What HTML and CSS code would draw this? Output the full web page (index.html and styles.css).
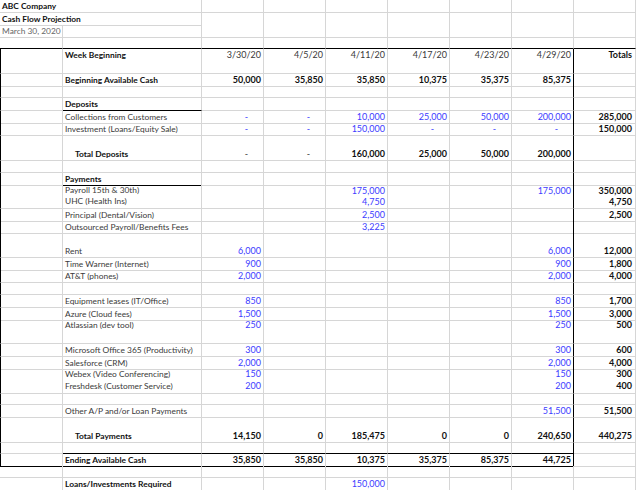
FILE: index.html
```html
<!DOCTYPE html>
<html lang="en">
<head>
    <meta charset="UTF-8">
    <meta name="viewport" content="width=device-width, initial-scale=1.0">
    <title>Cash Flow Projection</title>
    <link rel="stylesheet" href="styles.css">
</head>
<body>

<div class="sheet">
    <!-- En-tête -->
    <div class="row h13">
        <div class="c span2 b">ABC Company</div>
        <div class="c"></div><div class="c"></div><div class="c"></div><div class="c"></div><div class="c"></div><div class="c"></div><div class="c"></div>
    </div>
    <div class="row h12">
        <div class="c span2 b">Cash Flow Projection</div>
        <div class="c nb"></div><div class="c nb"></div><div class="c nb"></div><div class="c nb"></div><div class="c nb"></div><div class="c nb"></div><div class="c nb"></div>
    </div>
    <div class="row h13">
        <div class="c muted">March 30, 2020</div>
        <div class="c"></div><div class="c"></div><div class="c"></div><div class="c"></div><div class="c"></div><div class="c"></div><div class="c"></div><div class="c"></div>
    </div>
    <div class="row h11">
        <div class="c kb"></div><div class="c kb"></div><div class="c kb"></div><div class="c kb"></div><div class="c kb"></div><div class="c kb"></div><div class="c kb"></div><div class="c kb"></div><div class="c kb"></div>
    </div>

    <!-- Semaines -->
    <div class="row h25 top">
        <div class="c bl"></div>
        <div class="c b">Week Beginning</div>
        <div class="c n">3/30/20</div>
        <div class="c n">4/5/20</div>
        <div class="c n">4/11/20</div>
        <div class="c n">4/17/20</div>
        <div class="c n">4/23/20</div>
        <div class="c n kr">4/29/20</div>
        <div class="c n b last">Totals</div>
    </div>
    <div class="row h12">
        <div class="c bl"></div>
        <div class="c b">Beginning Available Cash</div>
        <div class="c n b">50,000</div>
        <div class="c n b">35,850</div>
        <div class="c n b">35,850</div>
        <div class="c n b">10,375</div>
        <div class="c n b">35,375</div>
        <div class="c n b kr">85,375</div>
        <div class="c last"></div>
    </div>
    <div class="row h12">
        <div class="c bl"></div><div class="c"></div><div class="c"></div><div class="c"></div><div class="c"></div><div class="c"></div><div class="c"></div><div class="c kr"></div><div class="c"></div>
    </div>

    <!-- Dépôts -->
    <div class="row h13">
        <div class="c bl"></div>
        <div class="c b kb">Deposits</div>
        <div class="c"></div><div class="c"></div><div class="c"></div><div class="c"></div><div class="c"></div><div class="c kr"></div><div class="c"></div>
    </div>
    <div class="row h12">
        <div class="c bl"></div>
        <div class="c">Collections from Customers</div>
        <div class="c n blu dash">-</div>
        <div class="c n blu dash">-</div>
        <div class="c n blu">10,000</div>
        <div class="c n blu">25,000</div>
        <div class="c n blu">50,000</div>
        <div class="c n blu kr">200,000</div>
        <div class="c n b last">285,000</div>
    </div>
    <div class="row h13">
        <div class="c bl"></div>
        <div class="c">Investment (Loans/Equity Sale)</div>
        <div class="c n blu dash">-</div>
        <div class="c n blu dash">-</div>
        <div class="c n blu">150,000</div>
        <div class="c n blu dash">-</div>
        <div class="c n blu dash">-</div>
        <div class="c n blu dash kr">-</div>
        <div class="c n b last">150,000</div>
    </div>
    <div class="row h25 bot">
        <div class="c bl"></div>
        <div class="c b ind">Total Deposits</div>
        <div class="c n dash">-</div>
        <div class="c n dash">-</div>
        <div class="c n b">160,000</div>
        <div class="c n b">25,000</div>
        <div class="c n b">50,000</div>
        <div class="c n b kr">200,000</div>
        <div class="c last"></div>
    </div>
    <div class="row h12">
        <div class="c bl"></div><div class="c"></div><div class="c"></div><div class="c"></div><div class="c"></div><div class="c"></div><div class="c"></div><div class="c kr"></div><div class="c"></div>
    </div>

    <!-- Paiements -->
    <div class="row h11">
        <div class="c bl"></div>
        <div class="c b kb">Payments</div>
        <div class="c"></div><div class="c"></div><div class="c"></div><div class="c"></div><div class="c"></div><div class="c kr"></div><div class="c"></div>
    </div>
    <div class="row h25 top two">
        <div class="c bl"></div>
        <div class="c">Payroll 15th &amp; 30th)<br>UHC (Health Ins)</div>
        <div class="c"></div>
        <div class="c"></div>
        <div class="c n blu">175,000<br>4,750</div>
        <div class="c"></div>
        <div class="c"></div>
        <div class="c n blu kr">175,000</div>
        <div class="c n b last">350,000<br>4,750</div>
    </div>
    <div class="row h12">
        <div class="c bl"></div>
        <div class="c">Principal (Dental/Vision)</div>
        <div class="c"></div><div class="c"></div>
        <div class="c n blu">2,500</div>
        <div class="c"></div><div class="c"></div><div class="c kr"></div>
        <div class="c n b last">2,500</div>
    </div>
    <div class="row h12">
        <div class="c bl"></div>
        <div class="c">Outsourced Payroll/Benefits Fees</div>
        <div class="c"></div><div class="c"></div>
        <div class="c n blu">3,225</div>
        <div class="c"></div><div class="c"></div><div class="c kr"></div>
        <div class="c last"></div>
    </div>

    <div class="row h25 bot">
        <div class="c bl"></div>
        <div class="c">Rent</div>
        <div class="c n blu">6,000</div>
        <div class="c"></div><div class="c"></div><div class="c"></div><div class="c"></div>
        <div class="c n blu kr">6,000</div>
        <div class="c n b last">12,000</div>
    </div>
    <div class="row h12">
        <div class="c bl"></div>
        <div class="c">Time Warner (Internet)</div>
        <div class="c n blu">900</div>
        <div class="c"></div><div class="c"></div><div class="c"></div><div class="c"></div>
        <div class="c n blu kr">900</div>
        <div class="c n b last">1,800</div>
    </div>
    <div class="row h13">
        <div class="c bl"></div>
        <div class="c">AT&amp;T (phones)</div>
        <div class="c n blu">2,000</div>
        <div class="c"></div><div class="c"></div><div class="c"></div><div class="c"></div>
        <div class="c n blu kr">2,000</div>
        <div class="c n b last">4,000</div>
    </div>
    <div class="row h12">
        <div class="c bl"></div><div class="c"></div><div class="c"></div><div class="c"></div><div class="c"></div><div class="c"></div><div class="c"></div><div class="c kr"></div><div class="c"></div>
    </div>

    <div class="row h13">
        <div class="c bl"></div>
        <div class="c">Equipment leases (IT/Office)</div>
        <div class="c n blu">850</div>
        <div class="c"></div><div class="c"></div><div class="c"></div><div class="c"></div>
        <div class="c n blu kr">850</div>
        <div class="c n b last">1,700</div>
    </div>
    <div class="row h11">
        <div class="c bl"></div>
        <div class="c">Azure (Cloud fees)</div>
        <div class="c n blu">1,500</div>
        <div class="c"></div><div class="c"></div><div class="c"></div><div class="c"></div>
        <div class="c n blu kr">1,500</div>
        <div class="c n b last">3,000</div>
    </div>
    <div class="row h25 top">
        <div class="c bl"></div>
        <div class="c">Atlassian (dev tool)</div>
        <div class="c n blu">250</div>
        <div class="c"></div><div class="c"></div><div class="c"></div><div class="c"></div>
        <div class="c n blu kr">250</div>
        <div class="c n b last">500</div>
    </div>

    <div class="row h13">
        <div class="c bl"></div>
        <div class="c">Microsoft Office 365 (Productivity)</div>
        <div class="c n blu">300</div>
        <div class="c"></div><div class="c"></div><div class="c"></div><div class="c"></div>
        <div class="c n blu kr">300</div>
        <div class="c n b last">600</div>
    </div>
    <div class="row h11">
        <div class="c bl"></div>
        <div class="c">Salesforce (CRM)</div>
        <div class="c n blu">2,000</div>
        <div class="c"></div><div class="c"></div><div class="c"></div><div class="c"></div>
        <div class="c n blu kr">2,000</div>
        <div class="c n b last">4,000</div>
    </div>
    <div class="row h26 top">
        <div class="c bl"></div>
        <div class="c">Webex (Video Conferencing)<br>Freshdesk (Customer Service)</div>
        <div class="c n blu">150<br>200</div>
        <div class="c"></div><div class="c"></div><div class="c"></div><div class="c"></div>
        <div class="c n blu kr">150<br>200</div>
        <div class="c n b last">300<br>400</div>
    </div>
    <div class="row h11">
        <div class="c bl"></div><div class="c"></div><div class="c"></div><div class="c"></div><div class="c"></div><div class="c"></div><div class="c"></div><div class="c kr"></div><div class="c"></div>
    </div>

    <div class="row h13">
        <div class="c bl"></div>
        <div class="c">Other A/P and/or Loan Payments</div>
        <div class="c"></div><div class="c"></div><div class="c"></div><div class="c"></div><div class="c"></div>
        <div class="c n blu kr">51,500</div>
        <div class="c n b last">51,500</div>
    </div>
    <div class="row h25 bot">
        <div class="c bl"></div>
        <div class="c b ind">Total Payments</div>
        <div class="c n b">14,150</div>
        <div class="c n b">0</div>
        <div class="c n b">185,475</div>
        <div class="c n b">0</div>
        <div class="c n b">0</div>
        <div class="c n b kr">240,650</div>
        <div class="c n b last">440,275</div>
    </div>
    <div class="row h11">
        <div class="c bl"></div>
        <div class="c kb"></div><div class="c kb"></div><div class="c kb"></div><div class="c kb"></div><div class="c kb"></div><div class="c kb"></div><div class="c kb kr"></div>
        <div class="c"></div>
    </div>

    <!-- Solde final -->
    <div class="row h12">
        <div class="c bl kb"></div>
        <div class="c b kb">Ending Available Cash</div>
        <div class="c n b kb">35,850</div>
        <div class="c n b kb">35,850</div>
        <div class="c n b kb">10,375</div>
        <div class="c n b kb">35,375</div>
        <div class="c n b kb">85,375</div>
        <div class="c n b kb kr">44,725</div>
        <div class="c"></div>
    </div>
    <div class="row h12">
        <div class="c"></div><div class="c"></div><div class="c"></div><div class="c"></div><div class="c"></div><div class="c"></div><div class="c"></div><div class="c"></div><div class="c"></div>
    </div>
    <div class="row h12">
        <div class="c"></div>
        <div class="c b">Loans/Investments Required</div>
        <div class="c"></div><div class="c"></div>
        <div class="c n blu">150,000</div>
        <div class="c"></div><div class="c"></div><div class="c"></div><div class="c"></div>
    </div>
</div>

</body>
</html>
```
FILE: styles.css
```css
/* Page de base */
body {
    margin: 0;
    background-color: #fff;
    font-family: Lato, 'Liberation Sans', sans-serif;
    font-size: 9px;
    color: #3a3a3a;
}

/* Feuille de calcul */
.sheet {
    width: 636px;
}

.row {
    display: grid;
    grid-template-columns: 63px 139px repeat(6, 62px) 62px;
}

.h11 { height: 11px; }
.h12 { height: 12px; }
.h13 { height: 13px; }
.h25 { height: 25px; }
.h26 { height: 26px; }

/* Cellule */
.c {
    box-sizing: border-box;
    display: flex;
    align-items: center;
    padding: 0 2px;
    line-height: 12px;
    white-space: nowrap;
    border-right: 1px solid #d6d6d6;
    border-bottom: 1px solid #d6d6d6;
}

/* Libellés un peu plus serrés que les chiffres */
.c:not(.n) {
    font-size: 8.4px;
}

.span2 {
    grid-column: span 2;
}

.top .c { align-items: flex-start; }
.bot .c { align-items: flex-end; }
.two .c { line-height: 11px; padding-top: 1px; }

/* Nombres alignés à droite */
.n {
    justify-content: flex-end;
    text-align: right;
}

.last {
    padding-right: 3px;
}

.b {
    font-weight: bold;
    color: #111;
}

.muted {
    color: #666;
}

.blu {
    color: #3c3cff;
}

.dash {
    padding-right: 15px;
}

.ind {
    padding-left: 12px;
}

/* Bordures noires */
.bl { border-left: 1px solid #000; }
.kr { border-right: 1px solid #000; }
.kb { border-bottom: 1px solid #000; }
.nb { border-bottom-color: transparent; }
```
